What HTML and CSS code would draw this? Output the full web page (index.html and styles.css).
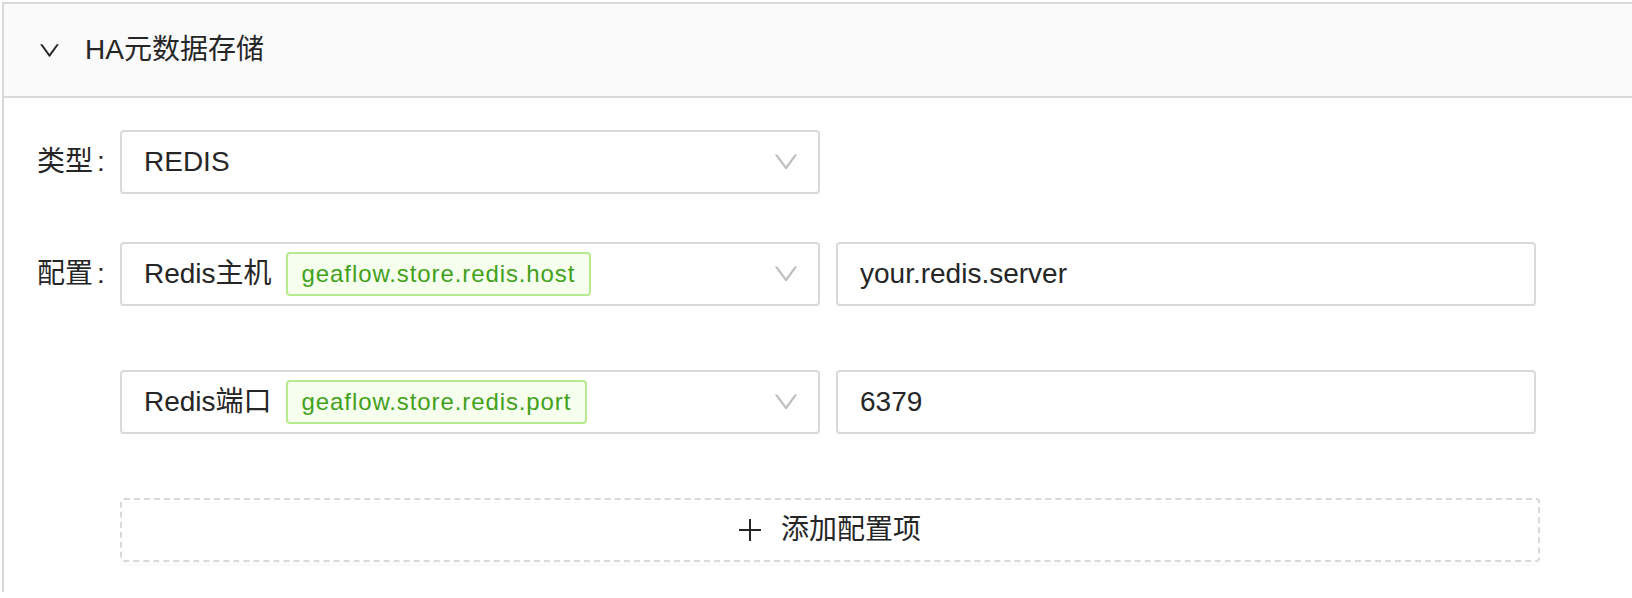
FILE: index.html
```html
<!DOCTYPE html>
<html lang="zh-CN">
<head>
<meta charset="utf-8">
<title>HA元数据存储</title>
<link rel="stylesheet" href="styles.css">
</head>
<body>
<div class="collapse">
  <div class="collapse-header">
    <svg class="header-arrow" viewBox="0 0 1024 1024" aria-hidden="true"><path d="M884 256h-75c-5.1 0-9.9 2.5-12.9 6.6L512 654.2 227.9 262.6c-3-4.1-7.8-6.6-12.9-6.6h-75c-6.5 0-10.3 7.4-6.5 12.7l352.6 486.1c12.8 17.6 39 17.6 51.7 0l352.6-486.1c3.9-5.3.1-12.7-6.4-12.7z"/></svg>
    <span class="header-title">HA元数据存储</span>
  </div>
  <div class="collapse-content">
    <div class="form-item">
      <div class="label">类型<span class="colon">:</span></div>
      <div class="control">
        <div class="select">
          <div class="select-value">REDIS</div>
          <svg class="select-arrow" viewBox="0 0 1024 1024" aria-hidden="true"><path d="M884 256h-75c-5.1 0-9.9 2.5-12.9 6.6L512 654.2 227.9 262.6c-3-4.1-7.8-6.6-12.9-6.6h-75c-6.5 0-10.3 7.4-6.5 12.7l352.6 486.1c12.8 17.6 39 17.6 51.7 0l352.6-486.1c3.9-5.3.1-12.7-6.4-12.7z"/></svg>
        </div>
      </div>
    </div>
    <div class="form-item">
      <div class="label">配置<span class="colon">:</span></div>
      <div class="control config-list">
        <div class="pair">
          <div class="select">
            <div class="select-value">Redis主机<span class="tag">geaflow.store.redis.host</span></div>
            <svg class="select-arrow" viewBox="0 0 1024 1024" aria-hidden="true"><path d="M884 256h-75c-5.1 0-9.9 2.5-12.9 6.6L512 654.2 227.9 262.6c-3-4.1-7.8-6.6-12.9-6.6h-75c-6.5 0-10.3 7.4-6.5 12.7l352.6 486.1c12.8 17.6 39 17.6 51.7 0l352.6-486.1c3.9-5.3.1-12.7-6.4-12.7z"/></svg>
          </div>
          <div class="input">your.redis.server</div>
        </div>
        <div class="pair">
          <div class="select">
            <div class="select-value">Redis端口<span class="tag">geaflow.store.redis.port</span></div>
            <svg class="select-arrow" viewBox="0 0 1024 1024" aria-hidden="true"><path d="M884 256h-75c-5.1 0-9.9 2.5-12.9 6.6L512 654.2 227.9 262.6c-3-4.1-7.8-6.6-12.9-6.6h-75c-6.5 0-10.3 7.4-6.5 12.7l352.6 486.1c12.8 17.6 39 17.6 51.7 0l352.6-486.1c3.9-5.3.1-12.7-6.4-12.7z"/></svg>
          </div>
          <div class="input">6379</div>
        </div>
        <div class="add-btn">
          <svg class="plus" viewBox="0 0 22 22" aria-hidden="true"><path d="M11 0V22M0 11H22"/></svg>
          <span>添加配置项</span>
        </div>
      </div>
    </div>
  </div>
</div>
</body>
</html>
```
FILE: styles.css
```css
html, body {
  margin: 0;
  padding: 0;
  background: #ffffff;
}

body {
  font-family: "Liberation Sans", "Noto Sans CJK SC", sans-serif;
  color: #262626;
  overflow: hidden;
}

.collapse {
  margin: 2px 0 0 2px;
  border: 2px solid #d9d9d9;
  border-right: 0;
  border-bottom: 0;
}

.collapse-header {
  height: 92px;
  background: #fafafa;
  border-bottom: 2px solid #d9d9d9;
  display: flex;
  align-items: center;
  padding-left: 33px;
  font-size: 28px;
  line-height: 44px;
}

.header-arrow {
  width: 25px;
  height: 25px;
  margin-right: 23px;
  fill: #262626;
  flex: none;
}

.collapse-content {
  padding: 32px 0 30px 33px;
}

.form-item {
  display: flex;
  align-items: flex-start;
}

.form-item + .form-item {
  margin-top: 48px;
}

.label {
  width: 83px;
  flex: none;
  height: 64px;
  display: flex;
  align-items: center;
  font-size: 28px;
  line-height: 40px;
}

.colon {
  margin-left: 4px;
}

.control {
  display: flex;
  flex-direction: column;
}

.config-list {
  gap: 64px;
}

.pair {
  display: flex;
  gap: 16px;
}

.select {
  width: 700px;
  height: 64px;
  box-sizing: border-box;
  border: 2px solid #d9d9d9;
  border-radius: 4px;
  background: #fff;
  display: flex;
  align-items: center;
  padding: 0 17px 0 22px;
  font-size: 28px;
  line-height: 40px;
}

.select-value {
  flex: 1;
  display: flex;
  align-items: center;
  white-space: nowrap;
}

.select-arrow {
  width: 30px;
  height: 30px;
  fill: #bfbfbf;
  flex: none;
}

.tag {
  margin-left: 14px;
  height: 44px;
  box-sizing: border-box;
  padding: 0 14px;
  border: 2px solid #b7eb8f;
  background: #f6ffed;
  color: #43a01c;
  border-radius: 4px;
  font-size: 24px;
  line-height: 40px;
  letter-spacing: 0.9px;
  display: inline-block;
}

.input {
  width: 700px;
  height: 64px;
  box-sizing: border-box;
  border: 2px solid #d9d9d9;
  border-radius: 4px;
  background: #fff;
  display: flex;
  align-items: center;
  padding: 0 22px;
  font-size: 28px;
  line-height: 40px;
}

.add-btn {
  width: 1420px;
  height: 64px;
  box-sizing: border-box;
  border: 2px dashed #d9d9d9;
  border-radius: 4px;
  background: #fff;
  box-shadow: 0 4px 0 rgba(0, 0, 0, 0.016);
  display: flex;
  align-items: center;
  justify-content: center;
  gap: 20px;
  font-size: 28px;
  line-height: 40px;
  color: #262626;
}

.plus {
  width: 22px;
  height: 22px;
  stroke: #262626;
  stroke-width: 2;
  fill: none;
  flex: none;
}
```
